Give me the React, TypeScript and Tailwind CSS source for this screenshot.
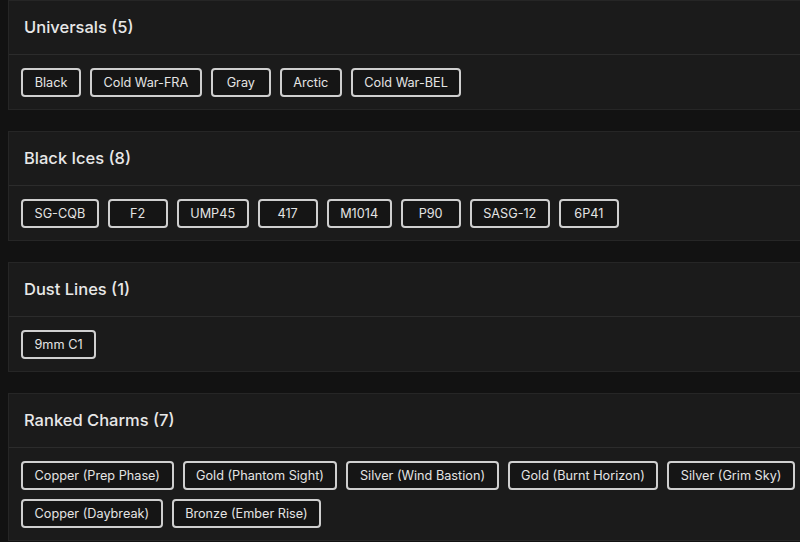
import React from "react";

const groups: { title: string; items: string[] }[] = [
  { title: "Universals (5)", items: ["Black", "Cold War-FRA", "Gray", "Arctic", "Cold War-BEL"] },
  { title: "Black Ices (8)", items: ["SG-CQB", "F2", "UMP45", "417", "M1014", "P90", "SASG-12", "6P41"] },
  { title: "Dust Lines (1)", items: ["9mm C1"] },
  {
    title: "Ranked Charms (7)",
    items: [
      "Copper (Prep Phase)",
      "Gold (Phantom Sight)",
      "Silver (Wind Bastion)",
      "Gold (Burnt Horizon)",
      "Silver (Grim Sky)",
      "Copper (Daybreak)",
      "Bronze (Ember Rise)",
    ],
  },
];

export default function App() {
  return (
    <div
      className="w-[800px] h-[542px] overflow-hidden bg-[#121212] pl-[8px]"
      style={{ fontFamily: "Inter, 'Noto Sans', sans-serif" }}
    >
      <div className="w-[820px] flex flex-col gap-[21px]">
        {groups.map((g) => (
          <div key={g.title} className="border border-[#262626] bg-[#1b1b1b]">
            <div className="h-[54px] flex items-center pl-[15px] border-b border-[#2c2c2c]">
              <span className="text-[16.5px] font-medium text-[#e8e8e8]">{g.title}</span>
            </div>
            <div className="flex flex-wrap gap-[9px] px-[12px] pt-[13px] pb-[12px] w-[800px]">
              {g.items.map((it) => (
                <div
                  key={it}
                  className="h-[29px] flex items-center justify-center px-[11.5px] min-w-[60px] border-2 border-[#cfcfcf] rounded-[4px] bg-[#151515] text-[12.7px] text-[#e4e4e4]"
                >
                  {it}
                </div>
              ))}
            </div>
          </div>
        ))}
      </div>
    </div>
  );
}
